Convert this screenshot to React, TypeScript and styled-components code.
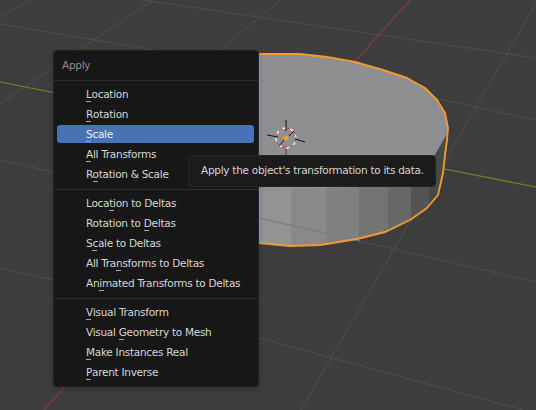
import styled, { createGlobalStyle } from "styled-components";

const GlobalStyle = createGlobalStyle`
  html, body {
    margin: 0;
    padding: 0;
    background: #3d3d3d;
  }
`;

const Viewport = styled.div`
  position: relative;
  width: 536px;
  height: 410px;
  overflow: hidden;
  font-family: "DejaVu Sans", sans-serif;
  font-size: 10.5px;
  letter-spacing: -0.28px;
`;
const Scene = styled.svg`
  display: block;
`;
const Menu = styled.div`
  position: absolute;
  left: 53px;
  top: 50px;
  width: 206px;
  box-sizing: border-box;
  background: #171717;
  border: 1px solid #232323;
  border-radius: 4px;
  box-shadow: 0 2px 5px rgba(0, 0, 0, 0.25);
`;
const MenuTitle = styled.div`
  height: 29px;
  line-height: 29px;
  padding-left: 8px;
  color: #8f8f8f;
`;
const Section = styled.div`
  display: flex;
  flex-direction: column;
  gap: 2px;
  border-top: 1px solid #2d2d2d;
  padding: 4px 0 6px;
  &:last-child {
    padding-bottom: 5px;
  }
`;
const Row = styled.div<{ $active?: boolean }>`
  height: 18px;
  line-height: 18px;
  margin: 0 4px 0 3px;
  padding-left: 29px;
  border-radius: 3px;
  color: ${(props) => (props.$active ? "#f0f0f0" : "#d6d6d6")};
  background: ${(props) => (props.$active ? "#4772b3" : "transparent")};
`;
const Key = styled.span`
  position: relative;
  &::after {
    content: "";
    position: absolute;
    left: 0;
    bottom: -2px;
    width: 5px;
    height: 1px;
    background: #a8a8a8;
  }
`;
const Tooltip = styled.div`
  position: absolute;
  left: 188px;
  top: 155px;
  width: 248px;
  height: 32px;
  box-sizing: border-box;
  padding-left: 12px;
  line-height: 28px;
  white-space: nowrap;
  color: #d6d6d6;
  background: #1b1b1b;
  border: 1px solid #252525;
  border-radius: 4px;
`;

interface IItem {
  label: string;
  keyAt: number;
  active?: boolean;
}

const sections: IItem[][] = [
  [
    { label: "Location", keyAt: 0 },
    { label: "Rotation", keyAt: 0 },
    { label: "Scale", keyAt: 0, active: true },
    { label: "All Transforms", keyAt: 0 },
    { label: "Rotation & Scale", keyAt: 1 },
  ],
  [
    { label: "Location to Deltas", keyAt: 4 },
    { label: "Rotation to Deltas", keyAt: 12 },
    { label: "Scale to Deltas", keyAt: 1 },
    { label: "All Transforms to Deltas", keyAt: 7 },
    { label: "Animated Transforms to Deltas", keyAt: 2 },
  ],
  [
    { label: "Visual Transform", keyAt: 0 },
    { label: "Visual Geometry to Mesh", keyAt: 7 },
    { label: "Make Instances Real", keyAt: 0 },
    { label: "Parent Inverse", keyAt: 0 },
  ],
];

const grid = [
  "M0 24L153 50",
  "M143 0L536 58",
  "M0 17L30 0",
  "M0 104L153 0",
  "M220 50L280 0",
  "M301 410L538 0",
  "M259 218L536 282",
  "M430 97L536 120",
  "M259 338L523 410",
  "M0 160L53 172",
  "M0 268L53 280",
];

const outline =
  "259,54 300,54 327,57 355,62 383,70 407,78 425,88 437,100 445,113 448,128 447,140 445,155 443,173 438,195 427,208 410,220 385,232 357,239 320,245 290,246 259,243";

const bands = [
  { points: "250,192 291,190 291,246 250,243", fill: "#929393" },
  { points: "291,190 326,188 326,245 291,246", fill: "#888988" },
  { points: "326,188 359,186 359,239 326,245", fill: "#7f807f" },
  { points: "359,186 388,184 388,232 359,239", fill: "#737474" },
  { points: "388,184 411,180 411,220 388,232", fill: "#666767" },
  { points: "411,180 429,165 429,206 411,220", fill: "#535454" },
  { points: "429,165 447,134 447,140 443,173 438,195 429,206", fill: "#464747" },
];

function ThreeDView() {
  return (
    <Scene width="536" height="410" viewBox="0 0 536 410">
      <rect width="536" height="410" fill="#3d3d3d" />
      {grid.map((d) => (
        <path key={d} d={d} stroke="#4f4f4f" strokeWidth="1" fill="none" />
      ))}
      <path d="M0 82L536 187" stroke="#6b8c25" strokeWidth="1.2" />
      <path d="M410 0L44 410" stroke="#84394a" strokeWidth="1.2" />
      <polygon points={outline} fill="#8e8f90" />
      {bands.map((band) => (
        <polygon key={band.fill} points={band.points} fill={band.fill} />
      ))}
      <path d="M259 218L360 241" stroke="#777878" strokeWidth="1" />
      <polygon points={outline} fill="none" stroke="#f39a2e" strokeWidth="1.9" strokeLinejoin="round" />
      <path d="M286 146V156" stroke="#555" strokeWidth="1.5" />
      <circle cx="286" cy="138" r="10" fill="none" stroke="#e8e8e8" strokeWidth="1.3" />
      <circle cx="286" cy="138" r="10" fill="none" stroke="#d8343c" strokeWidth="1.3" strokeDasharray="3.93 3.93" />
      <path
        d="M286 120V131M267 135L278 137M295 139L305 142M279 146L284 140M289 136L294 131"
        stroke="#111"
        strokeWidth="1"
        fill="none"
      />
      <circle cx="286" cy="138" r="2.6" fill="#f39a2e" />
    </Scene>
  );
}

function App() {
  return (
    <Viewport>
      <GlobalStyle />
      <ThreeDView />
      <Menu>
        <MenuTitle>Apply</MenuTitle>
        {sections.map((items) => (
          <Section key={items[0].label}>
            {items.map((item) => (
              <Row key={item.label} $active={item.active}>
                {item.label.slice(0, item.keyAt)}
                <Key>{item.label[item.keyAt]}</Key>
                {item.label.slice(item.keyAt + 1)}
              </Row>
            ))}
          </Section>
        ))}
      </Menu>
      <Tooltip>Apply the object's transformation to its data.</Tooltip>
    </Viewport>
  );
}

export default App;
